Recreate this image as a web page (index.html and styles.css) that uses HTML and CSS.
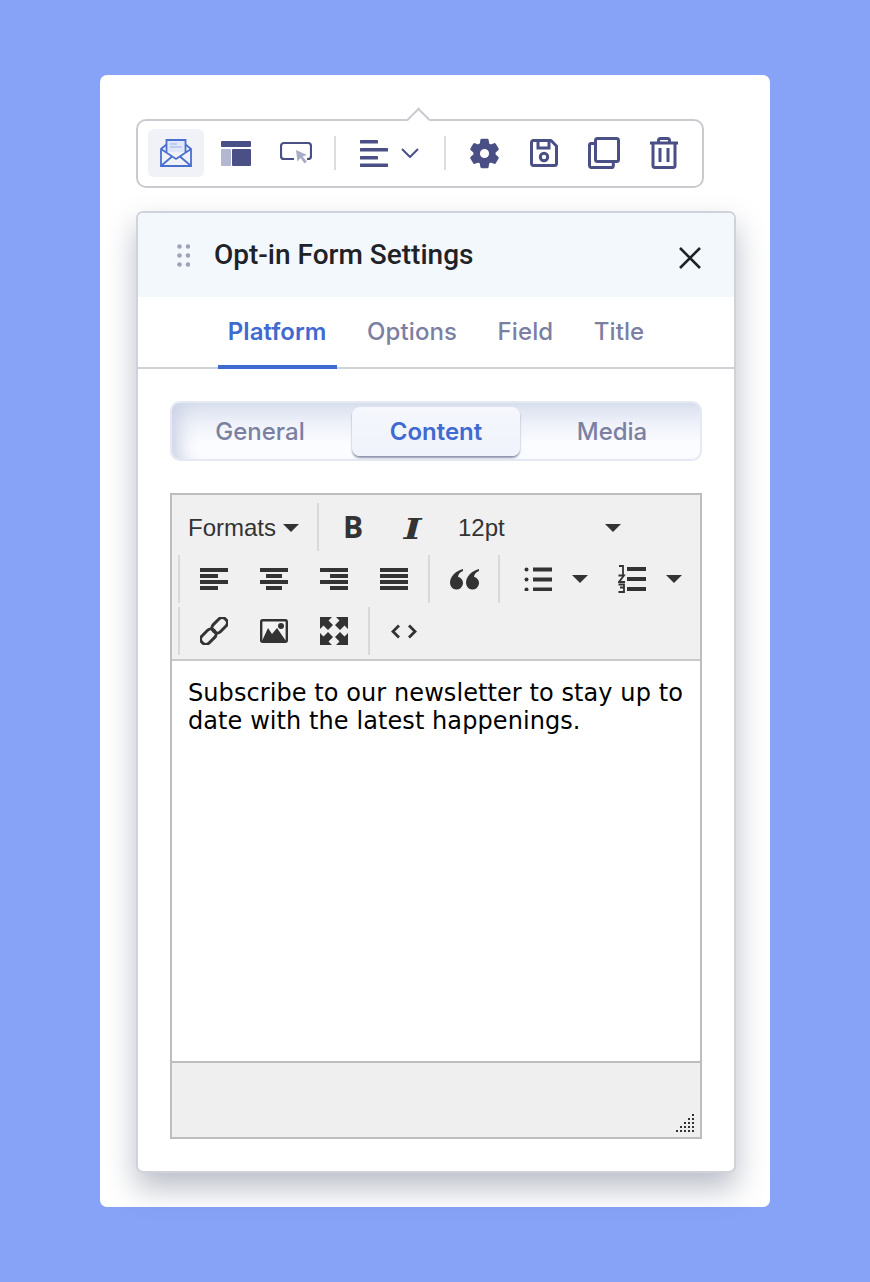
FILE: index.html
```html
<!DOCTYPE html>
<html lang="en">
<head>
<meta charset="utf-8">
<title>Opt-in Form Settings</title>
<link rel="stylesheet" href="styles.css">
</head>
<body>
<main class="card">
  <div class="toolbar">
    <span class="toolbar-arrow"></span>
    <button class="tool is-active">
      <svg width="32" height="28" viewBox="0 0 32 28" fill="none" stroke="#4a6fcf" stroke-width="1.8"><path d="M6.500 13V1h19v12" fill="#dfe7fa"/><path d="M10 5h7M10 8h12" stroke-width="1.2" stroke="#9db2e6"/><path d="M6.500 5.500 1 10v17h30V10l-5.500-4.500"/><path d="M1 10l15 10 15-10M1 27l11-9.500M31 27 20 17.500"/></svg>
    </button>
    <button class="tool">
      <svg width="30" height="25" viewBox="0 0 30 25"><rect width="30" height="6" rx="1" fill="#4a4f85"/><rect y="8" width="10" height="17" rx="1" fill="#b4b7d1"/><rect x="11" y="8" width="19" height="17" rx="1" fill="#4a4f85"/></svg>
    </button>
    <button class="tool">
      <svg width="32" height="23" viewBox="0 0 32 23" fill="none"><path d="M14 17H4a3 3 0 0 1-3-3V4a3 3 0 0 1 3-3h24a3 3 0 0 1 3 3v10a3 3 0 0 1-3 3h-1" stroke="#4a4f85" stroke-width="2.200"/><path d="M16 8l11 5-4.500 1.500 4.500 5-2.500 2-4-5.500-3 3.500z" fill="#a9acc6"/></svg>
    </button>
    <span class="tool-sep"></span>
    <button class="tool-align">
      <svg width="28" height="27" viewBox="0 0 28 27" fill="#4a4f85"><rect width="18" height="3.400" rx=".5"/><rect y="8" width="28" height="3.400" rx=".5"/><rect y="16" width="18" height="3.400" rx=".5"/><rect y="23.600" width="28" height="3.400" rx=".5"/></svg>
      <svg width="18" height="10" viewBox="0 0 18 10" fill="none" stroke="#4a4f85" stroke-width="2"><path d="M1 1l8 8 8-8"/></svg>
    </button>
    <span class="tool-sep"></span>
    <button class="tool">
      <svg width="35" height="35" viewBox="0 0 24 24" fill="#4a4f85" stroke="#4a4f85" stroke-width=".9" stroke-linejoin="round"><path d="M19.140 12.940c.04-.3.06-.61.06-.94 0-.32-.02-.64-.07-.94l2.030-1.580c.18-.14.23-.41.12-.61l-1.920-3.320c-.12-.22-.37-.29-.59-.22l-2.390.96c-.5-.38-1.030-.7-1.620-.94l-.36-2.540c-.04-.24-.24-.41-.48-.41h-3.840c-.24 0-.43.17-.47.41l-.36 2.540c-.59.24-1.130.57-1.620.94l-2.390-.96c-.22-.08-.47 0-.59.22L2.740 8.870c-.12.21-.08.47.12.61l2.030 1.580c-.05.3-.09.63-.09.94s.02.64.07.94l-2.030 1.580c-.18.14-.23.41-.12.61l1.920 3.320c.12.22.37.29.59.22l2.390-.96c.5.38 1.030.7 1.620.94l.36 2.540c.05.24.24.41.48.41h3.840c.24 0 .44-.17.47-.41l.36-2.540c.59-.24 1.130-.56 1.620-.94l2.390.96c.22.08.47 0 .59-.22l1.920-3.320c.12-.22.07-.47-.12-.61l-2.010-1.580zM12 15.600c-1.980 0-3.600-1.620-3.600-3.600s1.620-3.600 3.600-3.600 3.600 1.620 3.600 3.600-1.620 3.600-3.600 3.600z"/></svg>
    </button>
    <button class="tool">
      <svg width="28" height="28" viewBox="0 0 28 28" fill="none" stroke="#4a4f85" stroke-width="3"><path d="M3 1.500h18l5.500 5.500v17.500a2 2 0 0 1-2 2H3a2 2 0 0 1-1.500-2V3a2 2 0 0 1 1.500-1.500z" stroke-linejoin="round"/><path d="M8 2v7h11V2"/><circle cx="14" cy="18" r="3.700"/></svg>
    </button>
    <button class="tool">
      <svg width="32" height="32" viewBox="0 0 32 32" fill="none" stroke="#4a4f85" stroke-width="3" stroke-linejoin="round"><rect x="7.500" y="1.500" width="23" height="23" rx="2"/><path d="M7 6.500H3A1.800 1.800 0 0 0 1.500 8.300v20.500A1.800 1.800 0 0 0 3 30.500h20.500a1.800 1.800 0 0 0 1.800-1.700V25"/></svg>
    </button>
    <button class="tool">
      <svg width="28" height="32" viewBox="0 0 28 32" fill="none" stroke="#4a4f85" stroke-width="3"><path d="M0 6h28"/><path d="M8.500 6V3.500a2 2 0 0 1 2-2h7a2 2 0 0 1 2 2V6"/><path d="M3 6v23a1.800 1.800 0 0 0 1.800 1.500h18.400A1.800 1.800 0 0 0 25 29V6" stroke-linejoin="round"/><path d="M10 11v14M18 11v14"/></svg>
    </button>
  </div>

  <section class="panel">
    <header class="panel-head">
      <svg class="drag" width="13" height="23" viewBox="0 0 13 23" fill="#9ea3b8"><circle cx="2.500" cy="2.500" r="2.300"/><circle cx="11" cy="2.500" r="2.300"/><circle cx="2.500" cy="11.500" r="2.300"/><circle cx="11" cy="11.500" r="2.300"/><circle cx="2.500" cy="20.500" r="2.300"/><circle cx="11" cy="20.500" r="2.300"/></svg>
      <h1 class="panel-title">Opt-in Form Settings</h1>
      <svg class="close" width="24" height="24" viewBox="0 0 24 24" stroke="#1f2328" stroke-width="2.600"><path d="M2 2l20 20M22 2 2 22"/></svg>
    </header>
    <nav class="tabs">
      <a class="tab is-active">Platform</a>
      <a class="tab">Options</a>
      <a class="tab">Field</a>
      <a class="tab">Title</a>
    </nav>
    <div class="panel-body">
      <div class="segments">
        <a class="segment">General</a>
        <a class="segment is-active">Content</a>
        <a class="segment">Media</a>
      </div>
      <div class="editor">
        <div class="ed-toolbar">
          <div class="ed-row">
            <button class="ed-formats">Formats<span class="caret"></span></button>
            <span class="ed-sep ed-sep-first"></span>
            <button class="ed-btn"><span class="ed-bold">B</span></button>
            <button class="ed-btn"><span class="ed-italic">I</span></button>
            <button class="ed-size">12pt<span class="caret"></span></button>
          </div>
          <div class="ed-row">
            <span class="ed-sep"></span>
            <button class="ed-btn"><svg width="28" height="22" viewBox="0 0 28 22" fill="#333"><path d="M0 0h28v4H0zM0 6h18v4H0zM0 12h28v4H0zM0 18h18v4H0z"/></svg></button>
            <button class="ed-btn"><svg width="28" height="22" viewBox="0 0 28 22" fill="#333"><path d="M0 0h28v4H0zM6 6h16v4H6zM0 12h28v4H0zM6 18h16v4H6z"/></svg></button>
            <button class="ed-btn"><svg width="28" height="22" viewBox="0 0 28 22" fill="#333"><path d="M0 0h28v4H0zM10 6h18v4H10zM0 12h28v4H0zM10 18h18v4H10z"/></svg></button>
            <button class="ed-btn"><svg width="28" height="22" viewBox="0 0 28 22" fill="#333"><path d="M0 0h28v4H0zM0 6h28v4H0zM0 12h28v4H0zM0 18h28v4H0z"/></svg></button>
            <span class="ed-sep"></span>
            <button class="ed-btn"><svg width="29" height="21" viewBox="0 0 29 21" fill="#333"><path d="M13 0C5 2 0 8 0 14a6.500 6.500 0 1 0 8-6.300C8.500 5 10 3 13 2zM29 0C21 2 16 8 16 14a6.500 6.500 0 1 0 8-6.300C24.500 5 26 3 29 2z"/></svg></button>
            <span class="ed-sep"></span>
            <button class="ed-split">
              <svg class="ed-split-icon" width="28" height="24" viewBox="0 0 28 24" fill="#333"><circle cx="2.500" cy="2.500" r="2"/><circle cx="2.500" cy="12.500" r="2"/><circle cx="2.500" cy="22.500" r="2"/><path d="M9 .500h19v4H9zM9 10.500h19v4H9zM9 20.500h19v4H9z"/></svg>
              <span class="caret"></span>
            </button>
            <button class="ed-split">
              <svg class="ed-split-icon" width="28" height="28" viewBox="0 0 28 28" fill="none" stroke="#333" stroke-width="1.800"><path d="M1 1h4v8.500M.5 10.500h5.500l-5 6.500h6M.5 19.500h5.500v3H2M6 22.500v4.500H.5"/><path d="M9 2h19v4H9zM9 12h19v4H9zM9 22h19v4H9z" fill="#333" stroke="none"/></svg>
              <span class="caret"></span>
            </button>
          </div>
          <div class="ed-row">
            <span class="ed-sep"></span>
            <button class="ed-btn"><svg width="28" height="28" viewBox="0 0 28 28" fill="none" stroke="#333" stroke-width="3"><g transform="rotate(-45 14 14)"><rect x="-2.500" y="9" width="17" height="10" rx="4.500"/><rect x="13.500" y="9" width="17" height="10" rx="4.500"/></g></svg></button>
            <button class="ed-btn"><svg width="28" height="24" viewBox="0 0 28 24"><rect x="1.200" y="1.200" width="25.600" height="21.600" rx="1.500" fill="#f4f4f4" stroke="#333" stroke-width="2.400"/><path d="M2 22 8 9l4 6 5-6 9 13z" fill="#333"/><circle cx="21" cy="7" r="3" fill="#333"/></svg></button>
            <button class="ed-btn"><svg width="28" height="28" viewBox="0 0 28 28" fill="#333"><path d="M0 0h12L8.500 3.500 13 8l-5 5-4.500-4.500L0 12zM28 0v12l-3.500-3.500L20 13l-5-5 4.500-4.500L16 0zM0 28V16l3.500 3.500L8 15l5 5-4.500 4.500L12 28zM28 28H16l3.500-3.500L15 20l5-5 4.500 4.500L28 16z"/></svg></button>
            <span class="ed-sep"></span>
            <button class="ed-btn"><svg width="26" height="15" viewBox="0 0 26 15" fill="none" stroke="#333" stroke-width="2.800"><path d="M8 1.500 2 7.500l6 6M18 1.500l6 6-6 6"/></svg></button>
          </div>
        </div>
        <div class="ed-content">Subscribe to our newsletter to stay up to date with the latest happenings.</div>
        <div class="ed-status">
          <svg class="grip" width="20" height="20" viewBox="0 0 20 20" fill="#333"><path d="M16 0h2v2h-2zM12 4h2v2h-2zM16 4h2v2h-2zM8 8h2v2H8zM12 8h2v2h-2zM16 8h2v2h-2zM4 12h2v2H4zM8 12h2v2H8zM12 12h2v2h-2zM16 12h2v2h-2zM0 16h2v2H0zM4 16h2v2H4zM8 16h2v2H8zM12 16h2v2h-2zM16 16h2v2h-2z"/></svg>
        </div>
      </div>
    </div>
  </section>
</main>
</body>
</html>
```

FILE: styles.css
```css
* { box-sizing: border-box; }
html, body { margin: 0; }
body {
  height: 1282px;
  padding: 75px 100px;
  background: #86a3f8;
  overflow: hidden;
  font-family: "Inter", "Liberation Sans", sans-serif;
}
button {
  border: 0;
  padding: 0;
  background: none;
  font: inherit;
  color: inherit;
  display: flex;
  align-items: center;
  justify-content: center;
}
.card {
  width: 670px;
  height: 1132px;
  padding: 44px 34px 0 36px;
  background: #fff;
  border-radius: 7px;
}
.toolbar {
  position: relative;
  display: flex;
  align-items: flex-start;
  gap: 4px;
  width: 568px;
  height: 69px;
  padding: 8px 10px 0;
  border: 2px solid #c9cbd1;
  border-radius: 10px;
  background: #fff;
}
.toolbar-arrow {
  position: absolute;
  left: 272px;
  top: -10px;
  width: 17px;
  height: 17px;
  background: #fff;
  border-top: 2px solid #c9cbd1;
  border-left: 2px solid #c9cbd1;
  transform: rotate(45deg);
}
.tool {
  width: 56px;
  height: 48px;
  border-radius: 6px;
}
.tool.is-active { background: #f0f2f8; }
.tool-sep {
  width: 2px;
  height: 34px;
  margin: 7px 6px 0;
  background: #dcdde1;
}
.tool-align {
  width: 92px;
  height: 48px;
  gap: 13px;
  margin: 0 -2px;
  padding-left: 16px;
  justify-content: flex-start;
}
.panel {
  width: 600px;
  height: 962px;
  margin-top: 23px;
  border: 2px solid #cfd3d9;
  border-radius: 7px;
  background: #fff;
  box-shadow: 0 15px 30px rgba(62, 72, 100, .36);
}
.panel-head {
  display: flex;
  align-items: center;
  height: 84px;
  padding: 0 32px 0 39px;
  background: #f3f8fd;
  border-radius: 5px 5px 0 0;
}
.panel-title {
  flex: 1;
  margin: 0 0 0 24px;
  font: 500 28px/1 "Roboto", "Liberation Sans", sans-serif;
  color: #1f2328;
}
.close { margin-top: 6px; }
.tabs {
  display: flex;
  justify-content: center;
  gap: 20.5px;
  height: 72px;
  border-bottom: 2px solid #cfd3d9;
}
.tab {
  height: 72px;
  padding: 0 10px;
  font: 500 24px/70px "Inter", "Liberation Sans", sans-serif;
  letter-spacing: .1px;
  color: #7b80a3;
}
.tab.is-active {
  font-weight: 600;
  letter-spacing: .1px;
  color: #3f6ad1;
  border-bottom: 4px solid #3f6ad1;
}
.panel-body { padding: 32px; }
.segments {
  display: grid;
  grid-template-columns: repeat(3, 1fr);
  height: 60px;
  margin-bottom: 32px;
  border: 2px solid #e5e9f3;
  border-radius: 10px;
  background: linear-gradient(#d9dfee, #eff2f9 38%, #fbfcff 72%);
  box-shadow: inset 22px 0 18px -14px #ccd3e6;
}
.segment {
  display: flex;
  align-items: center;
  justify-content: center;
  font: 500 24px/1 "Inter", "Liberation Sans", sans-serif;
  color: #7b80a3;
}
.segment.is-active {
  margin: 4px;
  height: 49px;
  font-weight: 600;
  color: #3f6ad1;
  background: linear-gradient(#f5f7fd, #f0f3fb);
  border-radius: 8px;
  box-shadow: 0 2px 2px #8c93ad;
}
.editor {
  height: 646px;
  border: 2px solid #bdbdbd;
}
.ed-toolbar {
  height: 166px;
  padding: 8px 0 4px 6px;
  display: flex;
  flex-direction: column;
  gap: 4px;
  background: #f0f0f0;
  border-bottom: 2px solid #c9c9c9;
}
.ed-row {
  display: flex;
  align-items: center;
  height: 48px;
}
.ed-sep {
  flex: none;
  width: 2px;
  height: 48px;
  margin: 0 4px;
  background: #d9d9d9;
}
.ed-row > .ed-sep:first-child { margin-left: 0; }
.ed-sep-first { margin-left: 3px; }
.ed-btn {
  flex: none;
  width: 60px;
  height: 48px;
}
.ed-formats, .ed-size {
  flex: none;
  height: 48px;
  padding-top: 2px;
  justify-content: flex-start;
  font: 24px/1 "Liberation Sans", Arial, sans-serif;
  color: #333;
}
.ed-formats { width: 136px; padding-left: 10px; }
.ed-size { width: 194px; padding-left: 15px; }
.ed-formats .caret { margin-left: 7px; }
.ed-size .caret { margin-left: 100px; }
.caret {
  flex: none;
  width: 0;
  height: 0;
  border-left: 8px solid transparent;
  border-right: 8px solid transparent;
  border-top: 8px solid #333;
}
.ed-split {
  flex: none;
  width: 94px;
  height: 48px;
  justify-content: flex-start;
  padding-left: 20px;
  gap: 20px;
}
.ed-bold {
  font: 700 30px/1 "Open Sans", "Liberation Sans", sans-serif;
  color: #333;
}
.ed-italic {
  margin-top: 5px;
  font: italic 700 28px/1 "DejaVu Serif", serif;
  color: #333;
  transform: scaleX(1.35);
}
.ed-content {
  height: 402px;
  padding: 18px 16px;
  font: 24px/28px "DejaVu Sans", Verdana, sans-serif;
  letter-spacing: .08px;
  color: #000;
  background: #fff;
  border-bottom: 2px solid #bdbdbd;
}
.ed-status {
  position: relative;
  height: 74px;
  background: #efefef;
}
.grip {
  position: absolute;
  right: 4px;
  bottom: 3px;
}
```
